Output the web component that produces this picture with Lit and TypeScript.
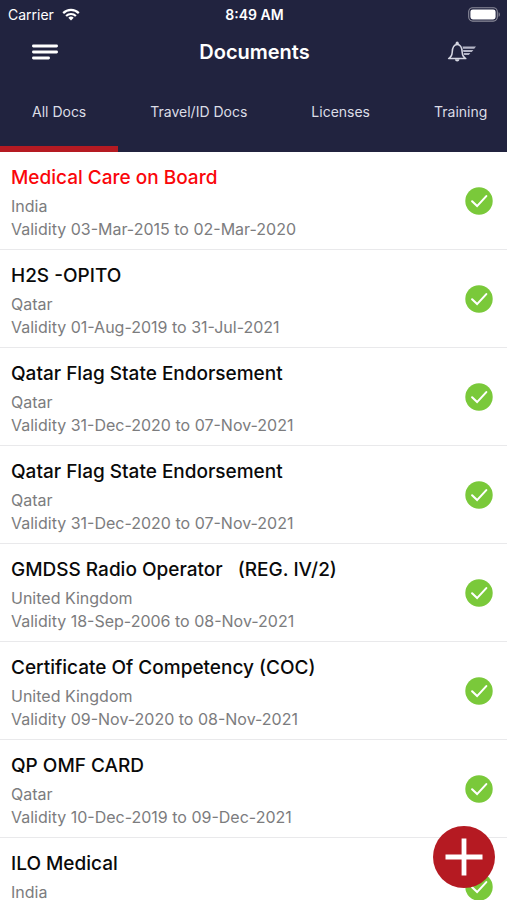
import { LitElement, html, css, svg } from "lit";
import { customElement, property, state } from "lit/decorators.js";
import { classMap } from "lit/directives/class-map.js";

interface Doc {
  title: string;
  country: string;
  from: string;
  to: string;
  expired?: boolean;
}

const TABS = ["All Docs", "Travel/ID Docs", "Licenses", "Training"];

const DOCS: Doc[] = [
  { title: "Medical Care on Board", country: "India", from: "03-Mar-2015", to: "02-Mar-2020", expired: true },
  { title: "H2S -OPITO", country: "Qatar", from: "01-Aug-2019", to: "31-Jul-2021" },
  { title: "Qatar Flag State Endorsement", country: "Qatar", from: "31-Dec-2020", to: "07-Nov-2021" },
  { title: "Qatar Flag State Endorsement", country: "Qatar", from: "31-Dec-2020", to: "07-Nov-2021" },
  { title: "GMDSS Radio Operator   (REG. IV/2)", country: "United Kingdom", from: "18-Sep-2006", to: "08-Nov-2021" },
  { title: "Certificate Of Competency (COC)", country: "United Kingdom", from: "09-Nov-2020", to: "08-Nov-2021" },
  { title: "QP OMF CARD", country: "Qatar", from: "10-Dec-2019", to: "09-Dec-2021" },
  { title: "ILO Medical", country: "India", from: "12-Dec-2019", to: "11-Dec-2021" },
];

const wifiIcon = svg`
  <svg width="18" height="13" viewBox="0 0 18 13" fill="none" stroke="#fff" stroke-width="2.2" aria-hidden="true">
    <path d="M1.2 5.1a11 11 0 0 1 15.6 0" />
    <path d="M4.1 8a7 7 0 0 1 9.8 0" />
    <path d="M9 12.4 6.3 9.7a3.9 3.9 0 0 1 5.4 0z" fill="#fff" stroke="none" />
  </svg>`;

const batteryIcon = svg`
  <svg width="33" height="15" viewBox="0 0 33 15" aria-hidden="true">
    <rect x="0.7" y="0.7" width="28.6" height="13.4" rx="4" fill="none" stroke="#8c8c9b" stroke-width="1.1" />
    <rect x="2.4" y="2.4" width="25.2" height="10" rx="2.4" fill="#fff" />
    <path d="M30.6 5.2c1.6.6 1.6 3.9 0 4.5z" fill="#8c8c9b" />
  </svg>`;

const menuIcon = svg`
  <svg width="26" height="16" viewBox="0 0 26 16" stroke="#fff" stroke-width="2.8" stroke-linecap="round" aria-hidden="true">
    <path d="M1.4 2h23.2M1.4 8h23.2M1.4 14h15.2" />
  </svg>`;

const bellIcon = svg`
  <svg width="30" height="22" viewBox="0 0 30 22" fill="none" stroke="#d6d7e2" aria-hidden="true">
    <path d="M1.6 17.6c2.400-1.400 3.400-3 3.600-6.200.2-4.600 1.400-7.800 5-7.800s4.800 3.200 5 7.800c.2 3.200 1.200 4.800 3.600 6.200z" stroke-width="1.500" stroke-linejoin="round" />
    <circle cx="10.200" cy="2.200" r="1.600" fill="#d6d7e2" stroke="none" />
    <path d="M8 18.200h4.400c0 3-4.400 3-4.400 0z" fill="#d6d7e2" stroke="none" />
    <path d="M15.500 5.600H29l-1.800 2.200H16zM16 8.900h10.400l-1.600 2H16.400zM16.600 12h6.800l-1.600 2h-4.600z" fill="#b4b5c6" stroke="none" />
  </svg>`;

const checkIcon = svg`
  <svg width="28" height="28" viewBox="0 0 28 28" role="img" aria-label="Verified">
    <circle cx="14" cy="14" r="13.700" fill="#7ac93a" />
    <path d="M7.100 14.300l5 4.800 9.200-10" fill="none" stroke="#fff" stroke-width="2.100" stroke-linecap="round" />
  </svg>`;

const plusIcon = svg`
  <svg width="38" height="38" viewBox="0 0 38 38" stroke="#fff" stroke-width="4.800" aria-hidden="true">
    <path d="M19 .5v37M.5 19h37" />
  </svg>`;

@customElement("doc-row")
export class DocRow extends LitElement {
  @property({ attribute: false }) doc!: Doc;

  static styles = css`
    :host {
      display: flex;
      align-items: center;
      justify-content: space-between;
      gap: 12px;
      padding: 0 14px 0 11px;
      border-bottom: 1px solid #e9e9eb;
    }
    .text {
      padding: 13px 0 8px;
    }
    .title {
      margin: 0 0 4px;
      font-size: 19px;
      line-height: 26px;
      font-weight: 500;
      color: #0a0a0a;
      white-space: pre-wrap;
    }
    .expired {
      color: #fa060a;
    }
    .line {
      margin: 0;
      font-size: 16px;
      line-height: 23px;
      color: #7c7c7e;
    }
    svg {
      display: block;
      flex: none;
    }
  `;

  render() {
    const d = this.doc;
    return html`
      <div class="text">
        <h2 class=${classMap({ title: true, expired: !!d.expired })}>${d.title}</h2>
        <p class="line">${d.country}</p>
        <p class="line">Validity ${d.from} to ${d.to}</p>
      </div>
      ${checkIcon}
    `;
  }
}

@customElement("app-root")
export class AppRoot extends LitElement {
  @state() private active = 0;

  static styles = css`
    :host {
      display: flex;
      flex-direction: column;
      position: relative;
      height: 100vh;
      overflow: hidden;
      background: #fff;
      font-family: Inter, "Liberation Sans", sans-serif;
    }
    header {
      flex: none;
      background: #21233f;
      color: #fff;
    }
    svg {
      display: block;
    }
    button {
      font: inherit;
      color: inherit;
      background: none;
      border: 0;
      padding: 0;
      cursor: pointer;
    }
    .status {
      display: grid;
      grid-template-columns: 1fr auto 1fr;
      align-items: center;
      height: 28px;
      padding: 0 6px 0 8px;
      font-size: 14px;
    }
    .carrier {
      display: flex;
      align-items: center;
      gap: 8px;
    }
    .time {
      font-weight: 600;
    }
    .battery {
      justify-self: end;
    }
    .bar {
      display: grid;
      grid-template-columns: 1fr auto 1fr;
      align-items: center;
      height: 48px;
      padding: 0 30px 0 32px;
    }
    .bar h1 {
      margin: 0;
      font-size: 20px;
      font-weight: 600;
    }
    .bell {
      justify-self: end;
    }
    .menu {
      justify-self: start;
    }
    .tabs {
      display: flex;
      height: 76px;
      overflow-x: auto;
      scrollbar-width: none;
    }
    .tab {
      flex: none;
      padding: 0 32px;
      border-bottom: 6px solid transparent;
      font-size: 14px;
      color: #dcdde6;
    }
    .selected {
      border-bottom-color: #b51a22;
    }
    main {
      flex: 1;
      min-height: 0;
      overflow-y: auto;
      scrollbar-width: none;
    }
    .list {
      margin: 0;
      padding: 0;
      list-style: none;
    }
    .add {
      position: absolute;
      right: 12px;
      bottom: 12px;
      display: grid;
      place-items: center;
      width: 62px;
      height: 62px;
      border-radius: 50%;
      background: #b51a22;
    }
  `;

  render() {
    return html`
      <header>
        <div class="status">
          <span class="carrier">Carrier ${wifiIcon}</span>
          <span class="time">8:49 AM</span>
          <span class="battery">${batteryIcon}</span>
        </div>
        <div class="bar">
          <button class="menu" aria-label="Menu">${menuIcon}</button>
          <h1>Documents</h1>
          <button class="bell" aria-label="Notifications">${bellIcon}</button>
        </div>
        <nav class="tabs" role="tablist">
          ${TABS.map(
            (t, i) => html`<button
              role="tab"
              aria-selected=${i === this.active}
              class=${classMap({ tab: true, selected: i === this.active })}
              @click=${() => (this.active = i)}
            >${t}</button>`
          )}
        </nav>
      </header>
      <main>
        <ul class="list">
          ${DOCS.map((d) => html`<li><doc-row .doc=${d}></doc-row></li>`)}
        </ul>
      </main>
      <button class="add" aria-label="Add document">${plusIcon}</button>
    `;
  }
}
